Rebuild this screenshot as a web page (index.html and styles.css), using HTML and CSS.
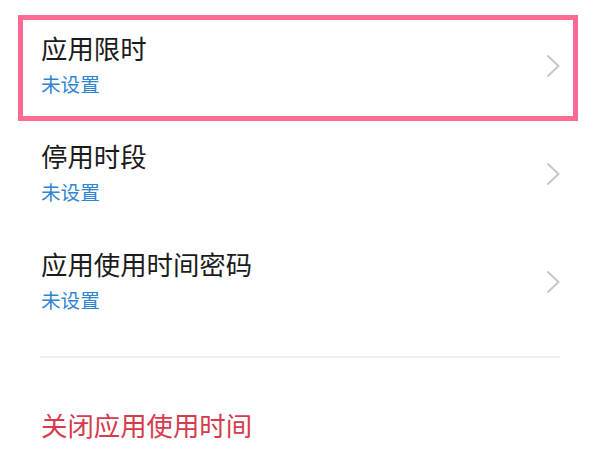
FILE: index.html
```html
<!doctype html>
<html>
<head>
    <meta charset="UTF-8">
    <link rel="stylesheet" href="styles.css">
</head>
<body>
    <div class="settings">
        <ul class="lista">
            <li class="item destaque">
                <div class="textos">
                    <span class="titulo">应用限时</span>
                    <span class="estado">未设置</span>
                </div>
                <svg class="seta" width="14" height="24" viewBox="0 0 14 24"><polyline points="1.5,1.5 12.5,12 1.5,22.5" /></svg>
            </li>
            <li class="item">
                <div class="textos">
                    <span class="titulo">停用时段</span>
                    <span class="estado">未设置</span>
                </div>
                <svg class="seta" width="14" height="24" viewBox="0 0 14 24"><polyline points="1.5,1.5 12.5,12 1.5,22.5" /></svg>
            </li>
            <li class="item">
                <div class="textos">
                    <span class="titulo">应用使用时间密码</span>
                    <span class="estado">未设置</span>
                </div>
                <svg class="seta" width="14" height="24" viewBox="0 0 14 24"><polyline points="1.5,1.5 12.5,12 1.5,22.5" /></svg>
            </li>
        </ul>
        <hr class="divisor">
        <div class="fechar">关闭应用使用时间</div>
    </div>
</body>
</html>
```

FILE: styles.css
```css
* {
    box-sizing: border-box;
}
body {
    margin: 0;
    background-color: #fff;
    font-family: "Noto Sans CJK SC", "Noto Sans", sans-serif;
}

.settings {
    width: 600px;
    height: 450px;
    overflow: hidden;
}

.lista {
    list-style: none;
    margin: 0;
    padding: 10px 0 0 0;
}

.item {
    position: relative;
    height: 108px;
    padding: 20px 40px 16px 41px;
    display: flex;
    flex-direction: row;
    align-items: center;
    justify-content: space-between;
}

/* moldura rosa de destaque */
.destaque::after {
    content: "";
    position: absolute;
    top: 5px;
    left: 18px;
    right: 22px;
    bottom: -3px;
    border: 5px solid #fd6b92;
}

.textos {
    display: flex;
    flex-direction: column;
    align-self: flex-start;
}

.titulo {
    font-size: 26.4px;
    line-height: 36px;
    color: #1b1b1b;
}

.estado {
    font-size: 19.6px;
    line-height: 36px;
    color: #2f84d3;
}

.seta polyline {
    fill: none;
    stroke: #c6c6c6;
    stroke-width: 2;
}

.divisor {
    border: none;
    height: 2px;
    background-color: #efefef;
    margin: 22px 40px 0 40px;
}

.fechar {
    margin: 49px 40px 0 41px;
    font-size: 26.4px;
    line-height: 36px;
    color: #d63a4c;
}
```
